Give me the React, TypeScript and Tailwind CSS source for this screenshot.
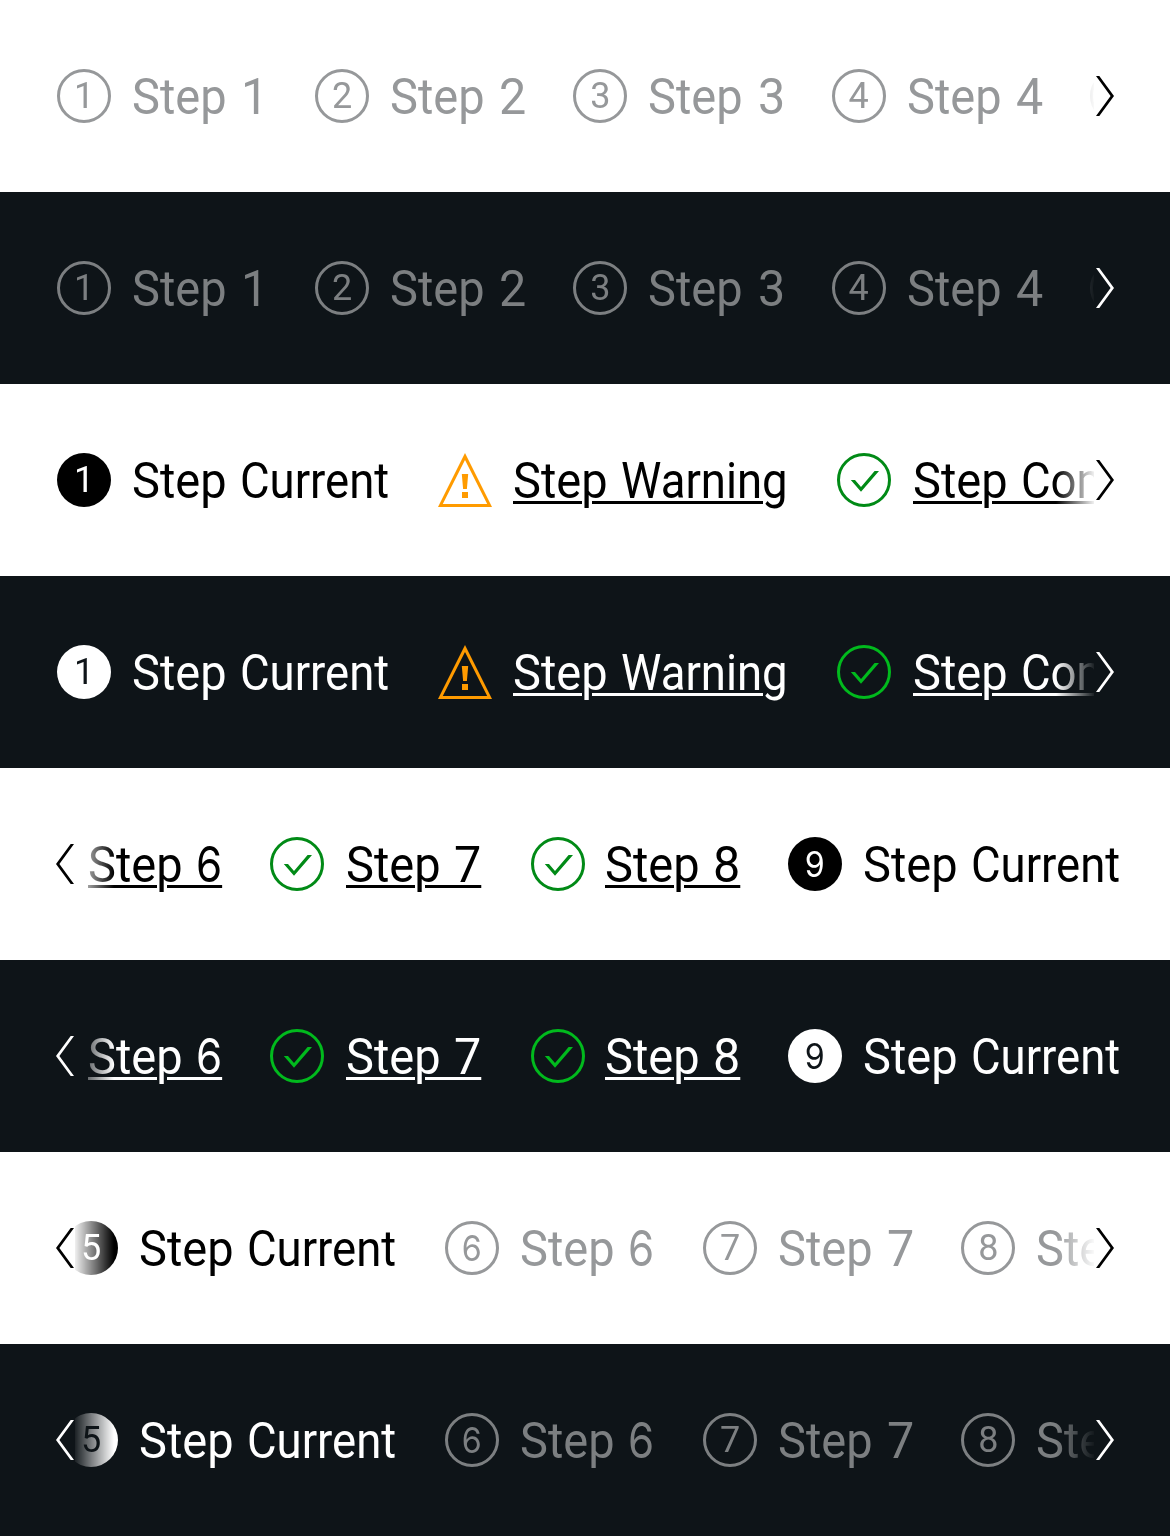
type Kind = "pending" | "current" | "warning" | "complete";

type Step = {
  kind: Kind;
  word: string;
  wordWidth: string;
  num?: string;
  gap?: string;
};

type RowData = {
  steps: Step[];
  offset: string;
  mask: string;
  prev?: boolean;
  next?: boolean;
};

const FONT = "font-['Roboto',sans-serif]";

function StatusIcon({ step, dark }: { step: Step; dark: boolean }) {
  if (step.kind === "warning") {
    return (
      <svg viewBox="0 0 72 72" className="size-[72px] shrink-0 fill-[#ff9b00]">
        <path fillRule="evenodd" d="M36 9 63 63H9ZM36 16 13.8 60H58.2Z" />
        <path d="M32.8 30h6.4l-1.3 15h-3.8zM33 48h6v6h-6z" />
      </svg>
    );
  }
  if (step.kind === "complete") {
    return (
      <svg
        viewBox="0 0 72 72"
        className={`size-[72px] shrink-0 ${dark ? "text-[#01ba1d]" : "text-[#018a16]"}`}
      >
        <circle cx="36" cy="36" r="25.5" fill="none" stroke="currentColor" strokeWidth="3" />
        <path fill="currentColor" d="M22.8 36h4.2l6 7L46.6 27H51L33 47.8z" />
      </svg>
    );
  }
  const look =
    step.kind === "current"
      ? dark
        ? "bg-white text-[#0e1418]"
        : "bg-black text-white"
      : dark
        ? "border-[3px] border-[#7c7f81] text-[#7c7f81]"
        : "border-[3px] border-[#96989a] text-[#96989a]";
  return (
    <div className="flex size-[72px] shrink-0 items-center justify-center">
      <div
        className={`flex size-[54px] items-center justify-center rounded-full text-[36px] leading-none ${look}`}
      >
        <Digit value={step.num ?? ""} small />
      </div>
    </div>
  );
}

function Digit({ value, small = false }: { value: string; small?: boolean }) {
  const slanted = value === "6" || value === "9";
  if (!slanted) return <span>{value}</span>;
  return (
    <span
      className={`inline-block font-['Inter',sans-serif] ${small ? "scale-x-[0.92] text-[35px]" : "origin-left scale-x-[0.88] text-[49px]"}`}
    >
      {value}
    </span>
  );
}

function StepItem({ step, dark }: { step: Step; dark: boolean }) {
  const underlined = step.kind === "warning" || step.kind === "complete";
  const line = underlined
    ? "underline decoration-[3px] underline-offset-[3px]"
    : "";
  const color =
    step.kind === "pending"
      ? dark
        ? "text-[#7c7f81]"
        : "text-[#96989a]"
      : dark
        ? "text-white"
        : "text-black";
  const numeric = step.word.length === 1;
  const slanted = step.word === "6";
  // Inline-blocks do not inherit a decoration, so a slanted digit is underlined directly.
  const word =
    numeric && slanted ? (
      <span
        className={`inline-block origin-left scale-x-[0.86] font-['Inter',sans-serif] text-[49px] ${line}`}
      >
        {step.word}
      </span>
    ) : (
      <span
        className={`inline-block origin-left ${numeric ? "scale-x-[0.97]" : "scale-x-[0.91]"} ${step.kind === "warning" ? "[clip-path:inset(0_1.5px_0_0)]" : ""} ${line}`}
      >
        {step.word}
      </span>
    );
  return (
    <div className={`flex shrink-0 items-center ${step.gap ?? "gap-3"}`}>
      <StatusIcon step={step} dark={dark} />
      <div className={`flex pt-[2px] text-[50px] leading-[70px] whitespace-pre ${color}`}>
        <div className="w-[108px]">
          <span className={`inline-block origin-left scale-x-[0.94] [word-spacing:2.3px] ${line}`}>
            {"Step "}
          </span>
        </div>
        <div
          className={`${step.wordWidth} ${step.kind === "pending" && !slanted ? "pl-[1.2px]" : ""}`}
        >
          {word}
        </div>
      </div>
    </div>
  );
}

function Chevron({ dark, side }: { dark: boolean; side: "left" | "right" }) {
  return (
    <svg
      viewBox="0 0 18 40"
      className={`absolute top-[76px] h-10 w-[18px] ${side === "left" ? "left-14" : "right-14 -scale-x-100"} ${dark ? "fill-white" : "fill-black"}`}
    >
      <path d="M18 0h-3.3L0 20l14.7 20H18L3.4 20z" />
    </svg>
  );
}

function StepperRow({ row, dark }: { row: RowData; dark: boolean }) {
  return (
    <div
      className={`relative h-[192px] overflow-hidden ${dark ? "bg-[#0e1418]" : "bg-white"}`}
    >
      <div className={`flex h-full items-center overflow-hidden ${row.mask}`}>
        <div className={`flex shrink-0 gap-[39px] ${row.offset}`}>
          {row.steps.map((s, i) => (
            <StepItem key={i} step={s} dark={dark} />
          ))}
        </div>
      </div>
      {row.prev && <Chevron dark={dark} side="left" />}
      {row.next && <Chevron dark={dark} side="right" />}
    </div>
  );
}

const pending = (n: string): Step => ({
  kind: "pending",
  num: n,
  word: n,
  wordWidth: "w-[27.2px]",
});
const current = (n: string): Step => ({
  kind: "current",
  num: n,
  word: "Current",
  wordWidth: "w-[150px]",
});

const MASK_RIGHT =
  "[mask-image:linear-gradient(to_right,#000_1056px,rgba(0,0,0,0.06)_1094px,transparent_1094px)]";
const MASK_LEFT =
  "[mask-image:linear-gradient(to_right,transparent_75px,rgba(0,0,0,0.06)_75px,#000_114px)]";
const MASK_BOTH =
  "[mask-image:linear-gradient(to_right,transparent_75px,rgba(0,0,0,0.06)_75px,#000_114px,#000_1056px,rgba(0,0,0,0.06)_1094px,transparent_1094px)]";

const ROWS: RowData[] = [
  {
    steps: ["1", "2", "3", "4", "5"].map(pending),
    offset: "pl-12",
    mask: MASK_RIGHT,
    next: true,
  },
  {
    steps: [
      current("1"),
      { kind: "warning", word: "Warning", wordWidth: "w-[168px]" },
      { kind: "complete", word: "Complete", wordWidth: "w-[180px]", gap: "gap-[13px]" },
    ],
    offset: "pl-12",
    mask: MASK_RIGHT,
    next: true,
  },
  {
    steps: [
      { kind: "complete", word: "6", wordWidth: "w-[26px]" },
      { kind: "complete", word: "7", wordWidth: "w-[29px]", gap: "gap-[13px]" },
      { kind: "complete", word: "8", wordWidth: "w-[27px]", gap: "gap-[11px]" },
      current("9"),
    ],
    offset: "pl-1",
    mask: MASK_LEFT,
    prev: true,
  },
  {
    steps: [current("5"), pending("6"), pending("7"), pending("8")],
    offset: "pl-[55px]",
    mask: MASK_BOTH,
    prev: true,
    next: true,
  },
];

export default function App() {
  return (
    <div className={`flex w-[1170px] flex-col ${FONT}`}>
      {ROWS.map((row, i) => (
        <div key={i}>
          <StepperRow row={row} dark={false} />
          <StepperRow row={row} dark />
        </div>
      ))}
    </div>
  );
}
